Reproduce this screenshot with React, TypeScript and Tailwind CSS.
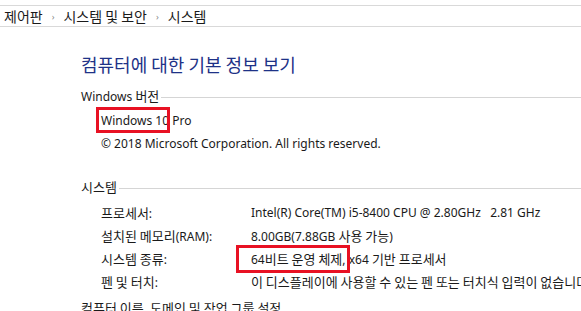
import React from 'react';

const font = { fontFamily: '"Noto Sans", "Noto Sans CJK KR", sans-serif' };

// Hangul runs are set a size larger so they sit like Malgun Gothic next to the Latin text
function T({ children, big = false }: { children: string; big?: boolean }) {
  const parts = children.split(/([\uAC00-\uD7A3]+(?:\s+[\uAC00-\uD7A3]+)*)/);
  return (
    <>
      {parts.map((p, i) =>
        /[\uAC00-\uD7A3]/.test(p) ? (
          <span key={i} className={big ? 'text-[14px]' : 'text-[13px]'} style={{ fontFamily: '"Noto Sans CJK KR", sans-serif' }}>
            {p}
          </span>
        ) : (
          <span key={i}>{p}</span>
        )
      )}
    </>
  );
}

const rows = [
  { label: '프로세서:', value: <>Intel(R) Core(TM) i5-8400 CPU @ 2.80GHz&nbsp;&nbsp;&nbsp;2.81 GHz</> },
  { label: '설치된 메모리(RAM):', value: <T>8.00GB(7.88GB 사용 가능)</T> },
  {
    label: '시스템 종류:',
    value: (
      <>
        <span className="relative">
          <T>64비트 운영 체제,</T>
          <span className="absolute -left-[15px] -top-[6px] h-[28px] w-[114px] border-[3px] border-[#e81123]" />
        </span>
        <T> x64 기반 프로세서</T>
      </>
    ),
  },
  { label: '펜 및 터치:', value: <T>이 디스플레이에 사용할 수 있는 펜 또는 터치식 입력이 없습니다.</T> },
];

function SectionHeader({ title }: { title: string }) {
  return (
    <div className="flex items-center gap-[2px] text-[12px] leading-[17px] text-[#1a1a1a]">
      <span className="whitespace-nowrap">
        <T>{title}</T>
      </span>
      <div className="mt-[2px] h-px flex-1 bg-[#d5d5d5]" />
    </div>
  );
}

export default function App() {
  return (
    <div className="h-[311px] w-[581px] overflow-hidden bg-white" style={font}>
      <div className="mt-[5px] flex h-[22px] items-center border-y border-[#d9d9d9] pl-[4px] text-[12px] leading-[17px] text-[#1a1a1a]">
        <T big>제어판</T>
        <span className="mx-[9px] text-[9px] text-[#888]">›</span>
        <T big>시스템 및 보안</T>
        <span className="mx-[9px] text-[9px] text-[#888]">›</span>
        <T big>시스템</T>
      </div>

      <div className="pl-[81px]">
        <h1
          className="mt-[24px] text-[18px] font-normal leading-[26px] text-[#1e3287]"
          style={{ fontFamily: '"Noto Sans CJK KR", sans-serif' }}
        >
          컴퓨터에 대한 기본 정보 보기
        </h1>

        <div className="mt-[10px]">
          <SectionHeader title="Windows 버전" />
          <div className="pl-[20px] text-[12px] text-[#1a1a1a]">
            <div className="mt-[7px] leading-[17px]">
              <span className="relative">
                Windows 10
                <span className="absolute -left-[5px] -top-[5px] h-[26px] w-[74px] border-[3px] border-[#e81123]" />
              </span>{' '}
              Pro
            </div>
            <div className="mt-[6px] leading-[17px]">© 2018 Microsoft Corporation. All rights reserved.</div>
          </div>
        </div>

        <div className="mt-[26px]">
          <SectionHeader title="시스템" />
          <div className="mt-[5px] pl-[20px] text-[12px] leading-[17px] text-[#1a1a1a]">
            {rows.map((r) => (
              <div key={r.label} className="flex h-[23px] items-center whitespace-nowrap">
                <div className="w-[150px] shrink-0">
                  <T>{r.label}</T>
                </div>
                <div>{r.value}</div>
              </div>
            ))}
          </div>
          <div className="mt-[6px] whitespace-nowrap text-[12px] leading-[17px] text-[#1a1a1a]">
            <T>컴퓨터 이름, 도메인 및 작업 그룹 설정</T>
          </div>
        </div>
      </div>
    </div>
  );
}
